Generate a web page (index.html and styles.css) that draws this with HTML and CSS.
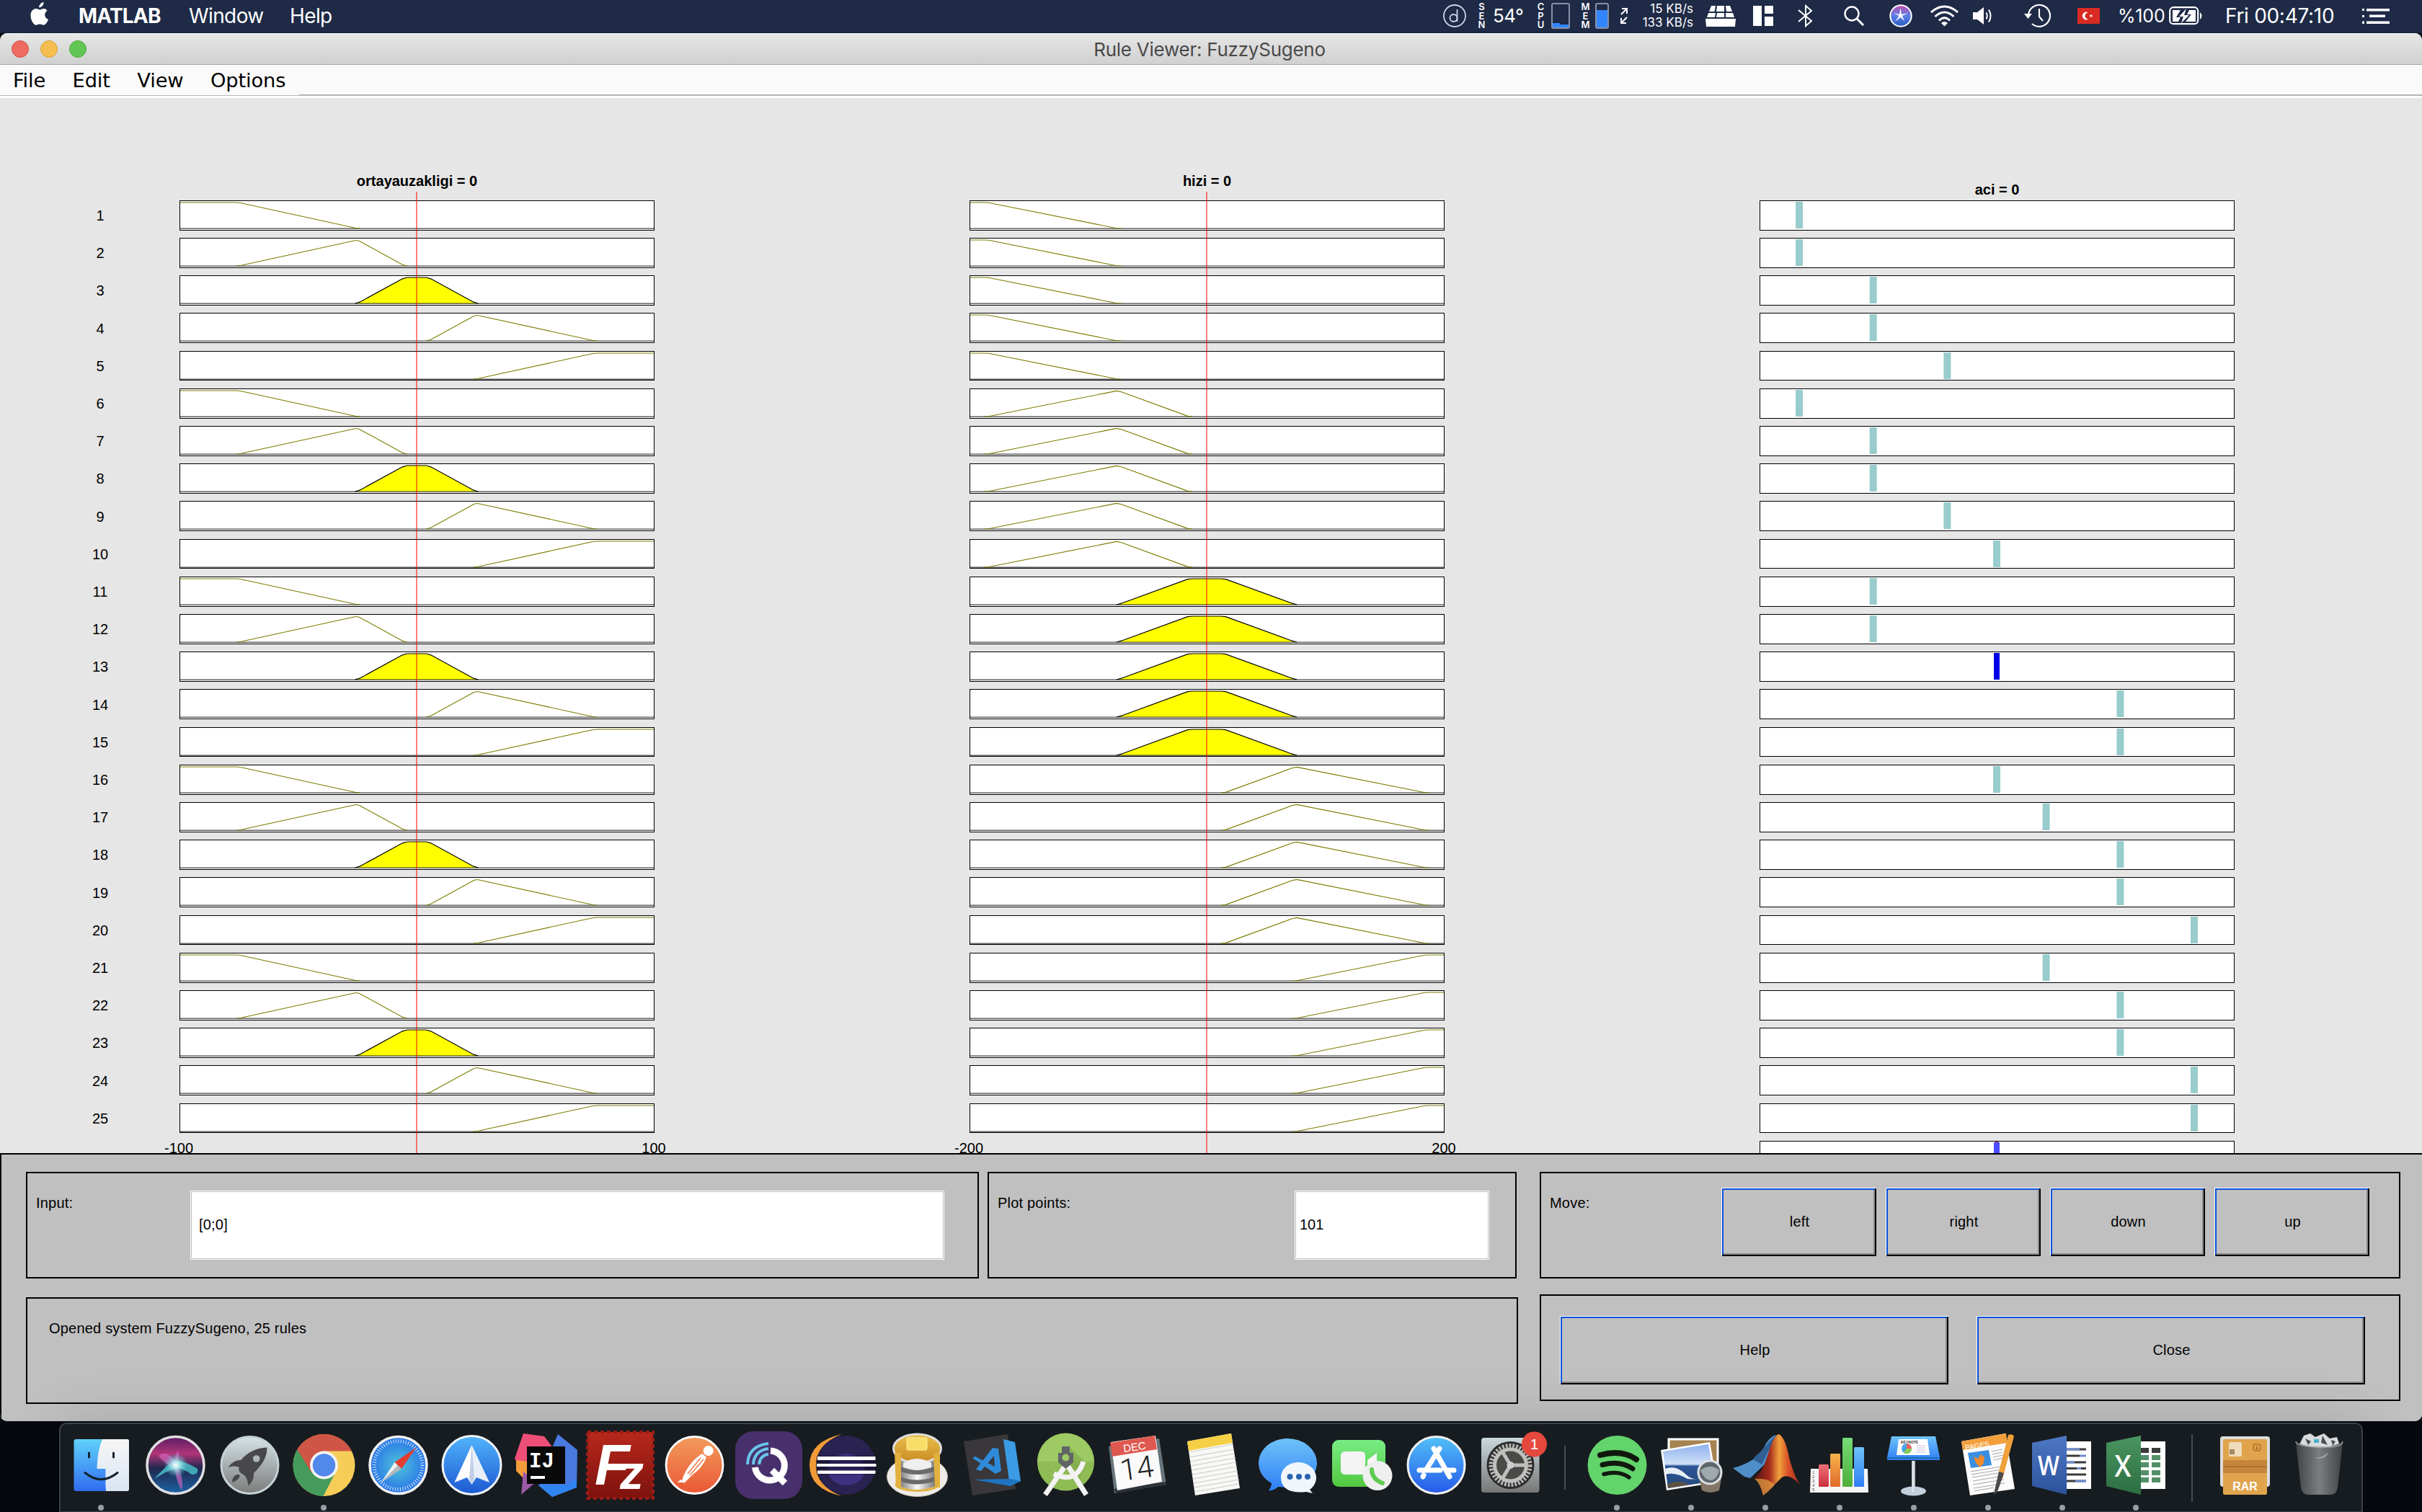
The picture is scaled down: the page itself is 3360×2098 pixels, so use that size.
FILE: index.html
```html
<!DOCTYPE html>
<html lang="en">
<head>
<meta charset="utf-8">
<title>Rule Viewer: FuzzySugeno</title>
<link rel="stylesheet" href="styles.css">
</head>
<body>

<!-- Shared membership function curves and output singletons -->
<svg class="defs" width="0" height="0">
  <defs>
    <g id="base"><path class="axis" d="M-1 38H660"/><path class="axis-dark" d="M-1 38.5H660"/></g>
    <g id="a1"><use href="#base"/><path class="mf" d="M-1 2H78L84.5 2.7 242.5 37.3 249 38"/></g>
    <g id="a2"><use href="#base"/><path class="mf" d="M78 38L84.5 37.3 242.5 2.7H246L249 3.8 308.3 36.2 314.8 38"/></g>
    <g id="a3"><path class="fired" d="M242.5 38L249 36.2 308.3 3.8 314.8 2H341.2L347.7 3.8 407 36.2 413.5 38"/><use href="#base"/></g>
    <g id="a4"><use href="#base"/><path class="mf" d="M578 38L571.5 37.3 413.5 2.7H410L407 3.8 347.7 36.2 341.2 38"/></g>
    <g id="a5"><use href="#base"/><path class="mf" d="M660 2H578L571.5 2.7 413.5 37.3 407 38"/></g>
    <g id="b1"><use href="#base"/><path class="mf" d="M-1 2H19L25.3 2.3 203 37.7 209.6 38"/></g>
    <g id="b2"><use href="#base"/><path class="mf" d="M18.7 38L25.3 37.7 203 2.4 209.6 3.8 301.7 37.4 308.3 38"/></g>
    <g id="b3"><path class="fired" d="M203 38L209.6 36.2 301.7 2.6 308.3 2H347.7L354.3 2.6 446.4 36.2 453 38"/><use href="#base"/></g>
    <g id="b4"><use href="#base"/><path class="mf" d="M637.3 38L630.7 37.7 453 2.4 446.4 3.8 354.3 37.4 347.7 38"/></g>
    <g id="b5"><use href="#base"/><path class="mf" d="M660 2H637L630.7 2.3 453 37.7 446.4 38"/></g>
    <rect id="s1" class="spike" x="49" y="1" width="10" height="37"/>
    <rect id="s2" class="spike" x="151.7" y="1" width="10" height="37"/>
    <rect id="s3" class="spike" x="254.4" y="1" width="10" height="37"/>
    <rect id="s4" class="spike" x="323" y="1" width="10" height="37"/>
    <rect id="s5" class="spike" x="391.6" y="1" width="10" height="37"/>
    <rect id="s6" class="spike" x="494.4" y="1" width="10" height="37"/>
    <rect id="s7" class="spike" x="597" y="1" width="10" height="37"/>

    <linearGradient id="gFinder" x2="0" y2="1"><stop stop-color="#60d2f9"/><stop offset="1" stop-color="#2f6cf0"/></linearGradient>
    <linearGradient id="gFace" x2="0" y2="1"><stop stop-color="#f6f6f6"/><stop offset="1" stop-color="#d9e5f2"/></linearGradient>
    <linearGradient id="gSiri" x2="0" y2="1"><stop stop-color="#5a1d63"/><stop offset=".3" stop-color="#b03478"/><stop offset=".55" stop-color="#20284f"/><stop offset="1" stop-color="#1b64a6"/></linearGradient>
    <radialGradient id="gGlow"><stop stop-color="#fff"/><stop offset=".3" stop-color="#b4f3f4" stop-opacity=".85"/><stop offset="1" stop-color="#49c4dc" stop-opacity="0"/></radialGradient>
    <linearGradient id="gRocket" x2="0" y2="1"><stop stop-color="#d6e3e7"/><stop offset="1" stop-color="#7b7b7b"/></linearGradient>
    <radialGradient id="gSafari"><stop stop-color="#4fc3d8"/><stop offset="1" stop-color="#2873ea"/></radialGradient>
    <linearGradient id="gBlue" x2="0" y2="1"><stop stop-color="#51b4fb"/><stop offset="1" stop-color="#1c58d2"/></linearGradient>
    <linearGradient id="gStore" x2="0" y2="1"><stop stop-color="#52c0f9"/><stop offset="1" stop-color="#2559e8"/></linearGradient>
    <linearGradient id="gPost" x2="0" y2="1"><stop stop-color="#f29b5c"/><stop offset="1" stop-color="#ea5836"/></linearGradient>
    <linearGradient id="gFz" x2="0" y2="1"><stop stop-color="#b8281c"/><stop offset="1" stop-color="#7d120e"/></linearGradient>
    <linearGradient id="gHoney" x2="0" y2="1"><stop stop-color="#eac14e"/><stop offset="1" stop-color="#c98a22"/></linearGradient>
    <linearGradient id="gSteel"><stop stop-color="#777"/><stop offset=".5" stop-color="#fafafa"/><stop offset="1" stop-color="#777"/></linearGradient>
    <linearGradient id="gMsg" x2="0" y2="1"><stop stop-color="#6fc3f8"/><stop offset="1" stop-color="#2f7ef6"/></linearGradient>
    <linearGradient id="gFace2" x2="0" y2="1"><stop stop-color="#79ec84"/><stop offset="1" stop-color="#52c840"/></linearGradient>
    <linearGradient id="gPref" x2="0" y2="1"><stop stop-color="#cbd8de"/><stop offset="1" stop-color="#777"/></linearGradient>
    <linearGradient id="gSea" x2="0" y2="1"><stop stop-color="#8fb1ee"/><stop offset=".45" stop-color="#cfe0f8"/><stop offset=".5" stop-color="#2c5499"/><stop offset="1" stop-color="#274b78"/></linearGradient>
    <linearGradient id="gMat"><stop stop-color="#4a120f"/><stop offset=".35" stop-color="#a92d1c"/><stop offset=".55" stop-color="#f0a23e"/><stop offset=".75" stop-color="#d94f27"/><stop offset="1" stop-color="#9d2a1c"/></linearGradient>
    <linearGradient id="gRed" x2="0" y2="1"><stop stop-color="#ee7077"/><stop offset="1" stop-color="#cc2f3e"/></linearGradient>
    <linearGradient id="gOrange" x2="0" y2="1"><stop stop-color="#f7b34b"/><stop offset="1" stop-color="#df6a2c"/></linearGradient>
    <linearGradient id="gGreen" x2="0" y2="1"><stop stop-color="#76dc77"/><stop offset="1" stop-color="#4eae38"/></linearGradient>
    <linearGradient id="gWord" x2="0" y2="1"><stop stop-color="#4e78c4"/><stop offset="1" stop-color="#2c529c"/></linearGradient>
    <linearGradient id="gExcel" x2="0" y2="1"><stop stop-color="#4a9560"/><stop offset="1" stop-color="#2c6e42"/></linearGradient>
    <linearGradient id="gTrash"><stop stop-color="#44484b"/><stop offset=".5" stop-color="#85898b"/><stop offset="1" stop-color="#44484b"/></linearGradient>
    <linearGradient id="gMiniSiri" x2="0" y2="1"><stop stop-color="#c04fae"/><stop offset=".5" stop-color="#5a7fe8"/><stop offset="1" stop-color="#2a5cc0"/></linearGradient>
  </defs>
</svg>

<header class="menubar">
  <nav class="menubar-left">
    <svg class="apple" width="28" height="34" viewBox="0 0 28 34"><path fill="#fff" d="M19.600 0c.3 3.600-3 7.600-6.400 7.400C12.900 4 16.200.4 19.600 0zM24.500 12c-5 3-4.200 9.800 1.500 12-1.400 4-4 7.700-6.600 7.700-2 0-2.700-1.200-5.200-1.200s-3.300 1.200-5.100 1.200C5.600 31.700 1.500 25 1.500 18.500 1.500 12.500 5.200 9 9 9c2.300 0 3.900 1.400 5.300 1.400 1.300 0 3.200-1.600 5.900-1.500 1.800.1 3.400.9 4.300 3.100z"/></svg>
    <b class="app-name">MATLAB</b>
    <span class="menu-window">Window</span>
    <span>Help</span>
  </nav>
  <div class="status">
    <svg width="32" height="34" viewBox="0 0 32 34"><circle cx="16" cy="17" r="15" fill="none" stroke="#ccd5ea" stroke-width="1.800"/><circle cx="14.500" cy="20" r="5" fill="none" stroke="#ccd5ea" stroke-width="1.800"/><path d="M19.500 8V25" stroke="#ccd5ea" stroke-width="1.800"/></svg>
    <span class="vert">S<br>E<br>N</span>
    <span class="temp">54°</span>
    <span class="vert">C<br>P<br>U</span>
    <svg width="27" height="36" viewBox="0 0 27 36"><rect x="1" y="1" width="24" height="34" rx="2" fill="none" stroke="#8891a6" stroke-width="2"/><path fill="#3385ff" d="M2 28H12V30H24V34H2z"/></svg>
    <span class="vert">M<br>E<br>M</span>
    <svg width="20" height="36" viewBox="0 0 20 36"><rect x="1" y="1" width="17" height="34" rx="2" fill="none" stroke="#8891a6" stroke-width="2"/><path fill="#3385ff" d="M2 10H17V34H2z"/></svg>
    <svg width="14" height="24" viewBox="0 0 14 24" fill="none" stroke="#fff" stroke-width="2"><path d="M3 10L11 2M4 2H11V9M11 14L3 22M3 15V22H10"/></svg>
    <span class="net">15 KB/s<br>133 KB/s</span>
    <svg width="42" height="29" viewBox="0 0 42 29" fill="#fff"><path d="M8 0H14L12.500 8H5zM16 0H26V8H15zM28 0H34L37 8H29zM4 10H14L13 16H2zM16 10H26V16H15zM28 10H38L40 16H28zM0 18H42L41 29H1z"/></svg>
    <svg width="28" height="28" viewBox="0 0 28 28" fill="#fff"><path d="M0 0H12V28H0zM16 0H28V11H16zM16 15H28V28H16z"/></svg>
    <svg width="22" height="32" viewBox="0 0 22 32" fill="none" stroke="#fff" stroke-width="2"><path d="M1 8L19 23 11 30V2L19 9 1 24"/></svg>
    <svg width="30" height="28" viewBox="0 0 30 28" fill="none" stroke="#fff"><circle cx="12" cy="11" r="9.500" stroke-width="2.400"/><path d="M19 18L28 27" stroke-width="3"/></svg>
    <svg width="32" height="32" viewBox="0 0 32 32"><circle cx="16" cy="16" r="14.700" fill="url(#gMiniSiri)" stroke="#fff" stroke-width="2"/><path fill="#fff" d="M15.500 5L17 14 26 12 18 16 21 23 15.500 18 8 24 13.500 16 6 12 14 14z"/></svg>
    <svg width="41" height="30" viewBox="0 0 41 30" fill="none" stroke="#fff" stroke-width="3"><path d="M2 10Q20.500-6 39 10M7.500 16Q20.500 4 33.500 16M13 21.500Q20.500 14 28 21.500"/><path fill="#fff" stroke="none" d="M16 25Q20.500 21 25 25L20.500 29.500z"/></svg>
    <svg width="28" height="28" viewBox="0 0 28 28"><path fill="#fff" d="M0 9H6L15 2V26L6 19H0z"/><path d="M18.500 9.500Q21 14 18.500 18.500M22 5.500Q27 14 22 22.500" fill="none" stroke="#fff" stroke-width="2"/></svg>
    <svg width="38" height="34" viewBox="0 0 38 34" fill="none" stroke="#fff" stroke-width="2.200"><path d="M7 16A15 15 0 1 1 12 28M22 7V18L27 24"/><path d="M1 14H12L6.500 21z" fill="#fff" stroke="none"/></svg>
    <svg width="31" height="22" viewBox="0 0 31 22"><rect width="31" height="22" fill="#d92b23"/><path fill="#fff" d="M15 6.500A5.300 5.300 0 1 0 15 15.500 4.300 4.300 0 1 1 15 6.500zM16 11L21 9.200 18.500 13.500V8.500L21 12.800z"/></svg>
    <span class="charge">%100</span>
    <svg width="48" height="26" viewBox="0 0 48 26"><rect x="1.200" y="1.200" width="39" height="23" rx="5" fill="none" stroke="#fff" stroke-width="2.200"/><path fill="#fff" d="M5 5H16L10 15H16L13 21H5zM28 5H37V21H23L31 11H25zM43 8Q48 13 43 18z"/><path fill="#fff" d="M24 3L14 14H20L17 23 28 12H21z"/></svg>
    <span class="clock">Fri 00:47:10</span>
    <svg width="38" height="21" viewBox="0 0 38 21" fill="#fff"><path d="M0 0H3V3H0zM6 0H38V3.500H6zM0 9H3V12H0zM10 8.500H32V12H10zM0 17.500H3V21H0zM6 17.500H38V21H6z"/></svg>
  </div>
</header>

<main class="window">
  <div class="titlebar">
    <div class="lights"><i class="close"></i><i class="min"></i><i class="max"></i></div>
    <h1>Rule Viewer: FuzzySugeno</h1>
  </div>
  <nav class="appmenu"><span>File</span><span>Edit</span><span>View</span><span>Options</span></nav>

  <section class="figure">
    <ol class="rules">
      <li>1</li><li>2</li><li>3</li><li>4</li><li>5</li><li>6</li><li>7</li><li>8</li><li>9</li><li>10</li><li>11</li><li>12</li><li>13</li><li>14</li><li>15</li><li>16</li><li>17</li><li>18</li><li>19</li><li>20</li><li>21</li><li>22</li><li>23</li><li>24</li><li>25</li>
    </ol>
    <div class="variable">
      <h2>ortayauzakligi = 0</h2>
      <div class="plots">
        <svg><use href="#a1"/></svg><svg><use href="#a2"/></svg><svg><use href="#a3"/></svg><svg><use href="#a4"/></svg><svg><use href="#a5"/></svg>
        <svg><use href="#a1"/></svg><svg><use href="#a2"/></svg><svg><use href="#a3"/></svg><svg><use href="#a4"/></svg><svg><use href="#a5"/></svg>
        <svg><use href="#a1"/></svg><svg><use href="#a2"/></svg><svg><use href="#a3"/></svg><svg><use href="#a4"/></svg><svg><use href="#a5"/></svg>
        <svg><use href="#a1"/></svg><svg><use href="#a2"/></svg><svg><use href="#a3"/></svg><svg><use href="#a4"/></svg><svg><use href="#a5"/></svg>
        <svg><use href="#a1"/></svg><svg><use href="#a2"/></svg><svg><use href="#a3"/></svg><svg><use href="#a4"/></svg><svg><use href="#a5"/></svg>
      </div>
      <div class="range"><span>-100</span><span>100</span></div>
      <div class="cursor"></div>
    </div>
    <div class="variable">
      <h2>hizi = 0</h2>
      <div class="plots">
        <svg><use href="#b1"/></svg><svg><use href="#b1"/></svg><svg><use href="#b1"/></svg><svg><use href="#b1"/></svg><svg><use href="#b1"/></svg>
        <svg><use href="#b2"/></svg><svg><use href="#b2"/></svg><svg><use href="#b2"/></svg><svg><use href="#b2"/></svg><svg><use href="#b2"/></svg>
        <svg><use href="#b3"/></svg><svg><use href="#b3"/></svg><svg><use href="#b3"/></svg><svg><use href="#b3"/></svg><svg><use href="#b3"/></svg>
        <svg><use href="#b4"/></svg><svg><use href="#b4"/></svg><svg><use href="#b4"/></svg><svg><use href="#b4"/></svg><svg><use href="#b4"/></svg>
        <svg><use href="#b5"/></svg><svg><use href="#b5"/></svg><svg><use href="#b5"/></svg><svg><use href="#b5"/></svg><svg><use href="#b5"/></svg>
      </div>
      <div class="range"><span>-200</span><span>200</span></div>
      <div class="cursor"></div>
    </div>
    <div class="variable output">
      <h2>aci = 0</h2>
      <div class="plots">
        <svg><use href="#s1"/></svg><svg><use href="#s1"/></svg><svg><use href="#s2"/></svg><svg><use href="#s2"/></svg><svg><use href="#s3"/></svg>
        <svg><use href="#s1"/></svg><svg><use href="#s2"/></svg><svg><use href="#s2"/></svg><svg><use href="#s3"/></svg><svg><use href="#s4"/></svg>
        <svg><use href="#s2"/></svg><svg><use href="#s2"/></svg><svg><rect class="spike-active" x="324" y="1" width="8" height="37"/></svg><svg><use href="#s6"/></svg><svg><use href="#s6"/></svg>
        <svg><use href="#s4"/></svg><svg><use href="#s5"/></svg><svg><use href="#s6"/></svg><svg><use href="#s6"/></svg><svg><use href="#s7"/></svg>
        <svg><use href="#s5"/></svg><svg><use href="#s6"/></svg><svg><use href="#s6"/></svg><svg><use href="#s7"/></svg><svg><use href="#s7"/></svg>
        <svg><rect x="326" y="-1" width="4" height="3" fill="#e0202a"/><rect x="324" y="1" width="8" height="37" fill="#4c4cff"/></svg>
      </div>
    </div>
  </section>

  <section class="controls">
    <div class="box input"><label>Input:</label><div class="field">[0;0]</div></div>
    <div class="box points"><label>Plot points:</label><div class="field">101</div></div>
    <div class="box move"><label>Move:</label><div class="buttons"><button>left</button><button>right</button><button>down</button><button>up</button></div></div>
    <div class="box message">Opened system FuzzySugeno, 25 rules</div>
    <div class="box actions"><button>Help</button><button>Close</button></div>
  </section>
</main>

<footer class="desktop">
  <div class="dock">
    <div class="app running"><svg viewBox="0 0 103 110"><rect x="13.500" y="17" width="76.500" height="72" rx="3" fill="url(#gFinder)"/><path fill="url(#gFace)" d="M53 17H87Q90 17 90 20V86Q90 89 87 89H58Q57 78 57.500 58H45.500Q46 33 53 17z"/><path fill="none" stroke="#12222e" stroke-width="3" stroke-linecap="round" d="M34.500 36V42M68.500 36V42M29 63.500Q51 82 74 63.500"/></svg></div>
    <div class="app"><svg viewBox="0 0 103 110"><circle cx="51.500" cy="53" r="39.500" fill="url(#gSiri)" stroke="#e0dfe2" stroke-width="3.500"/><path fill="#4fd8dd" opacity=".7" d="M22 72Q42 50 51 46 66 48 82 58 84 66 74 66 60 56 52 57 38 62 22 72z"/><path fill="#e26ac8" opacity=".6" d="M28 40Q40 30 53 50 64 72 60 88 52 74 50 56 36 52 28 40zM55 32Q58 44 53 52 48 46 55 32z"/><circle cx="52" cy="53" r="17" fill="url(#gGlow)"/></svg></div>
    <div class="app"><svg viewBox="0 0 103 110"><circle cx="51.500" cy="53" r="39.500" fill="url(#gRocket)" stroke="#c4d2d6" stroke-width="3"/><path fill="#48484a" d="M75.500 28.500Q76 46 57 64 58 74 49.500 82 49 74 45 68L38 63Q35 59 37 56 30 53 22 56 28 46 39 46 54 29 75.500 28.500zM37 66Q40 72 27 77 27 67 35 66z"/><circle cx="60.700" cy="44" r="4.800" fill="#aeb6b9"/></svg></div>
    <div class="app running"><svg viewBox="0 0 103 110"><circle cx="51.500" cy="53" r="43" fill="#f6cd57"/><path fill="#449b5b" d="M51.500 53L14.300 31.500A43 43 0 0 0 50.500 96L68 62z"/><path fill="#cf5547" d="M14.300 31.500A43 43 0 0 1 90 33.500H51.500L34 63z"/><circle cx="51.500" cy="53" r="19.500" fill="#f3f3f3"/><circle cx="51.500" cy="53" r="15.700" fill="#5287ec"/></svg></div>
    <div class="app"><svg viewBox="0 0 103 110"><circle cx="51.500" cy="53" r="39.500" fill="url(#gSafari)" stroke="#f0f0f0" stroke-width="3.500"/><circle cx="51.500" cy="53" r="33.500" fill="none" stroke="#d8ecfa" stroke-width="5" stroke-dasharray="1 2.500"/><path fill="#e33d32" d="M76.500 28.500L46.500 49 56 58z"/><path fill="#f1f1f1" d="M27 78L46.500 49 51 53.500z"/><path fill="#b4b9bd" d="M27 78L51 53.500 56 58z"/></svg></div>
    <div class="app"><svg viewBox="0 0 103 110"><circle cx="51.500" cy="53" r="40.500" fill="url(#gBlue)" stroke="#eef3f8" stroke-width="3"/><path fill="#e8eff9" d="M51.500 25L76 77 58 70 51.500 80z"/><path fill="#fff" d="M51.500 25L27.500 77 45 70 51.500 80z"/><path fill="#c1cee6" d="M51.500 25L55 72 51.500 80 48 72z"/></svg></div>
    <div class="app"><svg viewBox="0 0 103 110"><path fill="#4a79e0" d="M68 10L95 32 94 84 60 97 42 82 55 40z"/><path fill="#ee4f78" d="M20 9L49 13 62 30 26 76 8 44z"/><path fill="#f39c3c" d="M10 46L26 48 25 76 10 61z"/><path fill="#9a5aa5" d="M20 62L38 76 17 94z"/><path fill="#3084f0" d="M40 80H80L94 72V84L60 97z"/><rect x="25" y="27" width="53" height="52" fill="#090909"/><text class="mono" x="28" y="56" font-size="29" fill="#fff">IJ</text><rect x="30" y="68" width="20" height="4" fill="#fff"/></svg></div>
    <div class="app"><svg viewBox="0 0 103 110"><rect x="6" y="7" width="91" height="92" fill="url(#gFz)"/><rect x="6" y="7" width="91" height="92" fill="none" stroke="#9b1c14" stroke-width="4" stroke-dasharray="5 4"/><text class="fz" x="16" y="80" font-size="80" textLength="68" lengthAdjust="spacing" fill="#fff">F<tspan dy="6" font-size="66">z</tspan></text></svg></div>
    <div class="app"><svg viewBox="0 0 103 110"><circle cx="51.500" cy="53" r="39.500" fill="url(#gPost)" stroke="#fff" stroke-width="2.800"/><path fill="#fff" d="M65 29A7 7 0 1 1 70 40 7 7 0 0 1 65 29zM62 37L68 42Q63 56 49 66L37 78 34 74Q42 50 62 37zM32 73L37 77 35 77H28z"/><path d="M60 43L42 65M64 45L45 67" stroke="#ee7446" stroke-width="1.500"/></svg></div>
    <div class="app"><svg viewBox="0 0 103 110"><rect x="5" y="6" width="93" height="94" rx="25" fill="#48306c"/><path d="M54 33A20.500 20.500 0 1 1 32.500 56M56 60L74 78" fill="none" stroke="#fff" stroke-width="9"/><path d="M22 52Q23 26 51 23M30 52Q31 33 51 30M38 52Q39 40 51 37.500" fill="none" stroke="#69c4ea" stroke-width="4"/></svg></div>
    <div class="app"><svg viewBox="0 0 103 110"><path fill="#f19a38" d="M50 10Q5 20 5 53T50 96Q14 82 14 53T50 10z"/><circle cx="56" cy="53" r="41" fill="#2a2250"/><ellipse cx="56" cy="59" rx="26" ry="22" fill="#3d3280"/><path fill="#0c0920" d="M15 40H98V66H15z" opacity=".5"/><path fill="#fff" d="M16 41H96.500V46H16zM15 51H97.500V55H15zM16 60.500H96.500V65H16z"/></svg></div>
    <div class="app"><svg viewBox="0 0 103 110"><ellipse cx="51.500" cy="69" rx="42" ry="27.500" fill="#efece7" stroke="#c9c1b2"/><ellipse cx="51.500" cy="80" rx="31" ry="10" fill="#e2b448"/><path fill="url(#gSteel)" d="M26 30H77V82Q51 92 26 82z"/><path fill="none" stroke="#6a6a6a" stroke-width="6" d="M27 58Q51 68 76 58M27 72Q51 81 76 72"/><ellipse cx="51.500" cy="30" rx="33" ry="20" fill="url(#gHoney)" stroke="#ddd" stroke-width="3"/><path fill="#e3b13e" d="M20 36H29V84H22zM74 36H83V84H76z"/><path fill="#efefef" d="M32 50Q51 38 71 50V56Q51 62 32 56z"/><rect x="37" y="15" width="28" height="17" rx="2" fill="#f8dd69" stroke="#fff1a0"/></svg></div>
    <div class="app"><svg viewBox="0 0 103 110"><g transform="translate(5 0)"><path fill="#393739" d="M8 20L69 10 80 86 20 95z"/><path fill="#3b9be4" d="M63 17L79 21 87 75 72 82z"/><path fill="#1e75c0" d="M22 73L72 72 87 75 72 82z"/><path fill="#2f8bda" d="M48 29L56 30 60 61 52 65 20 43 24 41 51 55 50 40 32 61 25 59z"/></g></svg></div>
    <div class="app"><svg viewBox="0 0 103 110"><circle cx="51.500" cy="49" r="39.500" fill="#8fbc55"/><path fill="#9dca63" d="M12 48A39.500 39.500 0 0 1 91 48z"/><path fill="#7ba548" opacity=".6" d="M58 29L80 50 66 80 52 60z"/><path fill="none" stroke="#f3f3f3" stroke-width="7" d="M50 55L23 94M55 55L80 94M35 65Q66 80 76 48"/><path fill="#616466" d="M46 27H57V36H62V49L51.500 58 41 49V36H46z"/><circle cx="51.500" cy="42.500" r="5" fill="#9dca63"/></svg></div>
    <div class="app"><svg viewBox="0 0 103 110"><g transform="translate(-3 0)"><path fill="#67747c" d="M12 27L82 16 92 80 20 92z"/><path fill="#2d3338" d="M20 86L92 76V80L22 92z"/><path fill="#fafafa" d="M15 21L77 12 86 76 24 88z"/><path fill="#df584f" d="M14 22L76 12 79 31 17 41z"/><g transform="rotate(-8 50 50)"><text x="51" y="33" font-size="15" text-anchor="middle" fill="#fff">DEC</text><text x="50" y="72" font-size="42" text-anchor="middle" class="thin" fill="#222">14</text></g></g></svg></div>
    <div class="app"><svg viewBox="0 0 103 110"><path fill="#f8f8f6" d="M15 20L76 9 88 85 26 95z"/><path fill="#f5cf45" d="M15 20L76 9 78 22 17 33z"/><path stroke="#c9c9c9" stroke-width="1" d="M18 42L80 31M19 48L81 37M20 54L82 43M21 60L83 49M22 66L84 55M23 72L85 61M24 78L86 67M25 84L87 73M25 90L87 79"/><path d="M17 35L78 24" stroke="#777" stroke-dasharray="1 2"/></svg></div>
    <div class="app"><svg viewBox="0 0 103 110"><path fill="url(#gMsg)" d="M51 16A41 34 0 0 1 51 84L38 83Q32 89 25 88 29 83 29 78 11 68 11 49A40 34 0 0 1 51 16z"/><path fill="#f0f6fc" d="M66 49A25 21.500 0 0 1 82 87L86 92 77 90Q42 94 42 69A24 21 0 0 1 66 49z"/><circle cx="54.500" cy="69" r="4" fill="#2b63ae"/><circle cx="67" cy="69" r="4" fill="#2b63ae"/><circle cx="79" cy="69" r="4" fill="#2b63ae"/></svg></div>
    <div class="app"><svg viewBox="0 0 103 110"><rect x="10" y="18" width="74" height="65" rx="9" fill="url(#gFace2)"/><path fill="#f4f4f4" d="M29 34H50Q56 34 56 40V60Q56 66 50 66H29Q22 66 22 60V40Q22 34 29 34zM59 46L72 36V63L59 55z"/><circle cx="73" cy="67.500" r="20.500" fill="#efefef"/><path fill="none" stroke="#5ecb50" stroke-width="6" stroke-linecap="round" d="M65 59Q65 72 80 78"/></svg></div>
    <div class="app"><svg viewBox="0 0 103 110"><circle cx="51.500" cy="53" r="39.500" fill="url(#gStore)" stroke="#f0f0f0" stroke-width="3"/><path fill="none" stroke="#fff" stroke-width="7" stroke-linecap="round" d="M56 30L37 60M48 30L70 69M28 60H57M66 60H76M34 67L33 69"/></svg></div>
    <div class="app"><svg viewBox="0 0 103 110"><rect x="11" y="15" width="80.500" height="76" rx="4" fill="url(#gPref)"/><circle cx="51.500" cy="53" r="33" fill="#2b2b2b"/><circle cx="51.500" cy="53" r="27" fill="none" stroke="#b5b5b3" stroke-width="6" stroke-dasharray="2.800 2"/><circle cx="51.500" cy="53" r="22" fill="#4a4a49" stroke="#bfbfbd" stroke-width="5"/><path d="M51.500 53H73M51.500 53L40 34M51.500 53L40 72" stroke="#bfbfbd" stroke-width="5"/><circle cx="51.500" cy="53" r="5" fill="#ccc"/><circle cx="84.500" cy="24" r="17.500" fill="#e5483c"/><text x="84.500" y="31" font-size="21" text-anchor="middle" fill="#fff">1</text></svg></div>
    <div class="divider"></div>
    <div class="app running"><svg viewBox="0 0 103 110"><circle cx="51.500" cy="53" r="41" fill="#63d46c"/><path fill="none" stroke="#11190f" stroke-linecap="round" d="M28 39Q58 31 78 45" stroke-width="8"/><path fill="none" stroke="#11190f" stroke-linecap="round" d="M31 52.500Q56 46 73 58" stroke-width="7"/><path fill="none" stroke="#11190f" stroke-linecap="round" d="M33 65.500Q54 60 68 70" stroke-width="5.500"/></svg></div>
    <div class="app running"><svg viewBox="0 0 103 110"><rect x="20" y="17" width="68" height="58" fill="#a58452" stroke="#fff" stroke-width="3"/><path fill="#fff" d="M9 32L77 21 87 77 17 88z"/><path fill="url(#gSea)" d="M12 34L75 24 84 75 19 85z"/><path fill="#e8eef6" d="M15 58Q30 52 44 66T80 62L81 66Q60 74 46 72 28 62 16 66z"/><path fill="#5d5140" d="M18 80Q34 72 48 80L19 85z"/><path fill="#857767" d="M61 66H94L90 88Q78 94 66 88z"/><circle cx="77" cy="63" r="16" fill="#5f676d" stroke="#dfe2e4" stroke-width="3"/><path fill="#9fa9ae" d="M64 60Q78 50 90 60 86 74 78 74T64 60z"/></svg></div>
    <div class="app running"><svg viewBox="0 0 103 110"><g transform="translate(2 0)"><path fill="#4f8ec9" d="M4 57Q20 53 32 45 38 36 44 36 52 14 64 11 54 34 48 52L28 71 20 69z"/><path fill="#2f5f93" d="M32 45Q44 32 64 11 54 32 44 52z"/><path fill="url(#gMat)" d="M67 10Q76 12 82 42 88 66 97 80 82 64 72 70 58 84 46 95 42 76 33 70 44 66 52 40 60 12 67 10z"/><path fill="#f2b74a" d="M34 72Q42 78 46 95 56 88 62 80 52 70 34 72z" opacity=".6"/></g></svg></div>
    <div class="app running"><svg viewBox="0 0 103 110"><path fill="#f5f5f5" d="M12 58H91L92 91H11z"/><g font-size="6" fill="#555"><text x="14" y="65">1</text><text x="14" y="71">2</text><text x="14" y="77">3</text><text x="14" y="83">4</text><text x="14" y="89">5</text></g><rect x="23" y="52" width="14" height="31" rx="1.500" fill="url(#gRed)"/><rect x="39" y="37" width="14" height="46" rx="1.500" fill="url(#gOrange)"/><rect x="56" y="15" width="14" height="68" rx="1.500" fill="url(#gGreen)"/><rect x="72" y="28" width="14" height="55" rx="1.500" fill="url(#gMsg)"/></svg></div>
    <div class="app running"><svg viewBox="0 0 103 110"><path fill="url(#gMsg)" d="M21 13H82L88 42V46H15V42z"/><path fill="#1f6fb8" d="M15 42H88V44H15z"/><path fill="#fff" d="M31 17H71L74 39H28z"/><text x="34" y="23" font-size="5" class="bold" fill="#333">KEYNOTE</text><circle cx="42" cy="30" r="7" fill="#4aa7e8"/><path fill="#f0605d" d="M42 30V23A7 7 0 0 1 49 30z"/><path fill="#8ccc50" d="M42 30H49A7 7 0 0 1 38 36z"/><path stroke="#c9b9d9" d="M56 26H68M56 29H68M56 32H68M56 35H68"/><path fill="#b9c0c6" d="M49 47H54V90H49z"/><ellipse cx="51.500" cy="89" rx="17.500" ry="6.500" fill="#c2d0de"/><path fill="#e6e9ec" d="M50 47H52V90H50z"/></svg></div>
    <div class="app running"><svg viewBox="0 0 103 110"><path fill="#fbfbfb" d="M15 20L76 9 89 86 27 95z"/><path fill="#f3a03c" d="M15 20L77 9 79 22 17 32z"/><g transform="rotate(-9 34 26)"><text x="20" y="30" font-size="10" fill="#fff">PAGES</text></g><path fill="#3b8fe0" d="M24 36L53 32 57 53 28 57z"/><path fill="#f28a2c" d="M32 41L38 44 42 38 47 42 46 50 41 56 35 50z"/><path stroke="#aaa" stroke-width="1.200" d="M57 34L72 31M58 38L72 35M59 42L73 39M60 46L74 43M28 62L70 55M29 66L71 59M30 70L72 63M31 75L73 68M31 80L74 73M32 85L75 78M33 89L60 84"/><path fill="#f0a039" d="M80 11Q86 9 88 13L72 72 65 70z"/><path fill="#4a4a4c" d="M67 62L74 64 65 90 60 94 61 88z"/></svg></div>
    <div class="app running"><svg viewBox="0 0 103 110"><path fill="#fff" d="M50 20H92V86H50z"/><path stroke="#3b3b3b" stroke-width="3" d="M58 31H85M58 40H76M58 49H85M58 57.500H85M58 66H85M58 75H85"/><path stroke="#6d8ed0" stroke-width="3" d="M58 31H76M76 40H85M58 49H69M72 57.500H78M70 75H85"/><path fill="url(#gWord)" d="M10 22L58 12V94L10 82z"/><text class="office" x="33" y="67" font-size="37" textLength="30" lengthAdjust="spacingAndGlyphs" text-anchor="middle" fill="#fff">W</text></svg></div>
    <div class="app running"><svg viewBox="0 0 103 110"><path fill="#fff" d="M50 20H92V86H50z"/><path fill="#3a3a3a" d="M58 29H69V36H58zM73 29H85V36H73z"/><path fill="#53906a" d="M58 39H69V46H58zM73 39H85V46H73zM58 49H69V56H58zM73 49H85V56H73zM58 60H69V67H58zM73 60H85V67H73zM58 70H69V77H58zM73 70H85V77H73z"/><path fill="url(#gExcel)" d="M10 22L58 12V94L10 82z"/><text class="office" x="33" y="69" font-size="42" textLength="23" lengthAdjust="spacingAndGlyphs" text-anchor="middle" fill="#fff">X</text></svg></div>
    <div class="divider tall"></div>
    <div class="app"><svg viewBox="0 0 103 110"><rect x="17" y="13" width="69" height="70" rx="4" fill="#dcdcda"/><rect x="21" y="17" width="61" height="77" rx="2" fill="#e0a44d"/><path fill="#c6853a" d="M21 46H82V64H21z"/><path stroke="#96602a" d="M21 55H82"/><rect x="29" y="21" width="18" height="20" rx="2" fill="#eedcba"/><path fill="#a58a62" d="M30 31H37V38H30z"/><rect x="63" y="24" width="10" height="9" rx="3" fill="none" stroke="#b27229" stroke-width="1.500"/><path fill="none" stroke="#b27229" stroke-width="1.500" d="M68 26V31M66 29L68 31 70 29"/><text x="51.500" y="88" font-size="16" text-anchor="middle" class="bold" fill="#fff">RAR</text></svg></div>
    <div class="app"><svg viewBox="0 0 103 110"><path fill="#d9dcde" d="M24 24L30 12 39 9 46 14 58 9 66 16 76 14 80 26 52 30z"/><path fill="#494c4e" d="M32 16L40 20 36 25zM56 12L63 25 54 22zM68 18L74 20 70 26z"/><path fill="#47b0c9" d="M44 17H51V22H44z"/><path fill="url(#gTrash)" opacity=".9" d="M19 21Q51 36 84 21L77 84Q76 94 66 94H37Q27 94 26 84z"/><path fill="none" stroke="#9fa3a5" stroke-width="1.500" d="M19 20Q19 27 51.500 28T84 20"/><path fill="#b9bcbd" opacity=".6" d="M44 42Q54 44 64 35 62 44 50 44z"/></svg></div>
  </div>
</footer>
</body>
</html>
```
FILE: styles.css
```css
* { box-sizing: border-box; }

body {
  margin: 0;
  width: 3360px;
  height: 2098px;
  overflow: hidden;
  display: flex;
  flex-direction: column;
  background: #05090e;
  font-family: "Liberation Sans", Arial, sans-serif;
  font-size: 20px;
  color: #000;
}

.defs { position: absolute; }

/* System menu bar */
.menubar {
  height: 46px;
  flex: none;
  display: flex;
  justify-content: space-between;
  background: linear-gradient(#1e2a46 43px, #18243d 46px);
  color: #fff;
  font-family: Inter, "Liberation Sans", sans-serif;
  font-size: 28px;
  line-height: 44px;
  letter-spacing: -0.6px;
}
.menubar-left { display: flex; padding-left: 41px; }
.apple { margin: 3px 40px 0 0; }
.app-name { width: 153px; letter-spacing: -0.8px; }
.menu-window { width: 140px; }

.status {
  display: grid;
  grid-template-columns: 47px 22px 60px 21px 41px 20px 33px 16px 104px 66px 62px 63px 64px 56px 60px 70px 75px 56px 71px 78px 190px 83px;
  height: 44px;
  align-items: center;
  white-space: nowrap;
}
.vert {
  width: 13px;
  font-size: 13px;
  font-weight: 600;
  line-height: 12.5px;
  letter-spacing: 0;
  text-align: center;
}
.temp { font-size: 26px; letter-spacing: -0.5px; }
.charge { font-size: 25px; letter-spacing: -0.2px; }
.net {
  width: 87px;
  font-size: 17px;
  line-height: 19px;
  letter-spacing: 0;
  text-align: right;
}
.clock { letter-spacing: -0.3px; }

/* Application window */
.window {
  height: 1926px;
  flex: none;
  display: flex;
  flex-direction: column;
  border-radius: 10px;
  overflow: hidden;
  background: #e6e6e6;
}
.titlebar {
  height: 44px;
  flex: none;
  display: grid;
  grid-template-columns: 200px 1fr 204px;
  align-items: center;
  background: linear-gradient(#f2f2f2, #e5e5e5 3px, #d0d0d0);
  border-bottom: 1px solid #a9a7a9;
}
.lights { display: flex; gap: 16px; padding-left: 16px; }
.lights i { width: 24px; height: 24px; border-radius: 50%; border: 1px solid; }
.lights .close { background: #ed6b60; border-color: #d35047; }
.lights .min { background: #f5bf4f; border-color: #d8a13b; }
.lights .max { background: #62c655; border-color: #51a73e; }
.titlebar h1 {
  margin: 0;
  padding-top: 2px;
  text-align: center;
  font: 400 26px/40px Inter, "Liberation Sans", sans-serif;
  letter-spacing: -0.25px;
  color: #4a4a4a;
}
.appmenu {
  height: 46px;
  flex: none;
  display: flex;
  gap: 37.5px;
  padding-left: 18px;
  font: 27.3px/44px "DejaVu Sans", sans-serif;
  letter-spacing: -0.15px;
  background: linear-gradient(#b4b4b4, #b4b4b4) 415px 41px / 100% 2px no-repeat,
              linear-gradient(#b4b4b4, #b4b4b4) 0 42px / 100% 1px no-repeat,
              linear-gradient(#fafafa 41px, #fff 41px);
}

/* Rule plots */
.figure {
  height: 1464px;
  flex: none;
  overflow: hidden;
  display: flex;
  padding-left: 89px;
}
.rules {
  margin: 0 60px 0 0;
  padding: 143px 0 0;
  width: 100px;
  list-style: none;
  display: flex;
  flex-direction: column;
  gap: 10.42px;
}
.rules li { height: 41.8px; flex: none; line-height: 41.8px; text-align: center; }
.variable { position: relative; width: 659px; margin-right: 437px; flex: none; }
.output { margin-right: 0; }
.variable h2 {
  height: 141.8px;
  margin: 0;
  padding-top: 103.4px;
  text-align: center;
  font-size: 20px;
  line-height: 24px;
}
.output h2 { padding-top: 115.4px; }
.plots { display: flex; flex-direction: column; gap: 10.42px; }
.plots svg {
  width: 659px;
  height: 41.8px;
  flex: none;
  background: #fff;
  border: 1px solid #000;
  overflow: hidden;
}
.axis { stroke: #000; stroke-opacity: 0.7; fill: none; }
.axis-dark { stroke: #000; stroke-opacity: 0.35; fill: none; }
.mf { fill: none; stroke: #7c7c00; stroke-width: 1.15; }
.fired { fill: #ff0; stroke: #000; stroke-width: 1.2; }
.spike { fill: #99cccc; }
.spike-active { fill: #0000e6; }
.range { display: flex; justify-content: space-between; margin: 9px -29px 0 -31px; line-height: 24px; }
.range span { width: 60px; text-align: center; }
.cursor {
  position: absolute;
  left: 328px;
  top: 130px;
  width: 2px;
  height: 1334px;
  background: rgba(255, 0, 0, 0.5);
}

/* Control panel */
.controls {
  height: 372px;
  flex: none;
  display: grid;
  grid-template-columns: 1322px 12px 734px 2px 30px 1194px;
  grid-template-rows: 148px 22px 4px 144px 4px;
  padding: 24px 0 0 34px;
  border: solid #000;
  border-width: 2px 0 0 2px;
  background: #c0c0c0;
  letter-spacing: 0.2px;
}
.box { border: 2px solid #000; display: flex; }
.input { grid-area: 1 / 1; }
.points { grid-area: 1 / 3; }
.move { grid-area: 1 / 6; }
.message { grid-area: 4 / 1 / 6 / 5; padding: 29px 30px; line-height: 24px; }
.actions { grid-area: 3 / 6 / 5 / 7; }
.box label { padding: 29px 0 0 12px; line-height: 24px; }
.field {
  height: 96px;
  margin: 24px 0 0 auto;
  background: #fff;
  border: 1px solid #fff;
  box-shadow: inset 0 0 0 1px #bdbdbd;
  line-height: 92px;
}
.input .field { width: 1046px; margin-right: 46px; padding-left: 11px; }
.points .field { width: 270px; margin-right: 36px; padding-left: 6px; letter-spacing: 0; }
.buttons { display: flex; gap: 13px; margin: 20px 41px 0 auto; }
button {
  width: 215px;
  height: 95px;
  padding: 0 0 0 2px;
  font: inherit;
  letter-spacing: inherit;
  color: #000;
  background: #c0c0c0;
  border: 0;
  box-shadow: inset 1px 1px #fff, inset -2px -2px #000, inset 3px 3px #0a50dc, inset -4px -4px #8a8a8a;
}
.actions { padding: 28px 0 0 26px; gap: 39px; }
.actions button { width: 539px; }

/* Dock */
.desktop { flex: none; height: 126px; padding: 2px 0 0 82px; position: relative; }
.dock {
  width: 3196px;
  height: 124px;
  display: flex;
  padding-left: 5px;
  background: #171c20;
  border: 2px solid #3a4245;
  border-bottom-width: 1px;
  border-radius: 10px 10px 0 0;
  box-shadow: 0 0 75px rgba(0, 0, 0, 0.14);
}
.app {
  width: 102.9px;
  flex: none;
  display: flex;
  flex-direction: column;
  align-items: center;
  padding-top: 4px;
}
.app svg { width: 103px; height: 110px; flex: none; overflow: visible; }
.app text { font-family: "Liberation Sans", sans-serif; }
.app .bold { font-weight: 700; }
.app .office { font-family: "Open Sans", sans-serif; font-weight: 600; }
.app .mono { font-family: "Liberation Mono", monospace; font-weight: 700; }
.app .fz { font-weight: 700; font-style: italic; }
.app .thin { font-family: Roboto, sans-serif; font-weight: 300; }
.running::after {
  content: "";
  width: 8px;
  height: 8px;
  margin-top: -2px;
  border-radius: 50%;
  background: #999ea2;
}
.divider { width: 2px; height: 61px; flex: none; margin: 30px 20px 0 23px; background: #474c50; }
.divider.tall { height: 94px; margin: 14px 21px 0 25px; }
```
